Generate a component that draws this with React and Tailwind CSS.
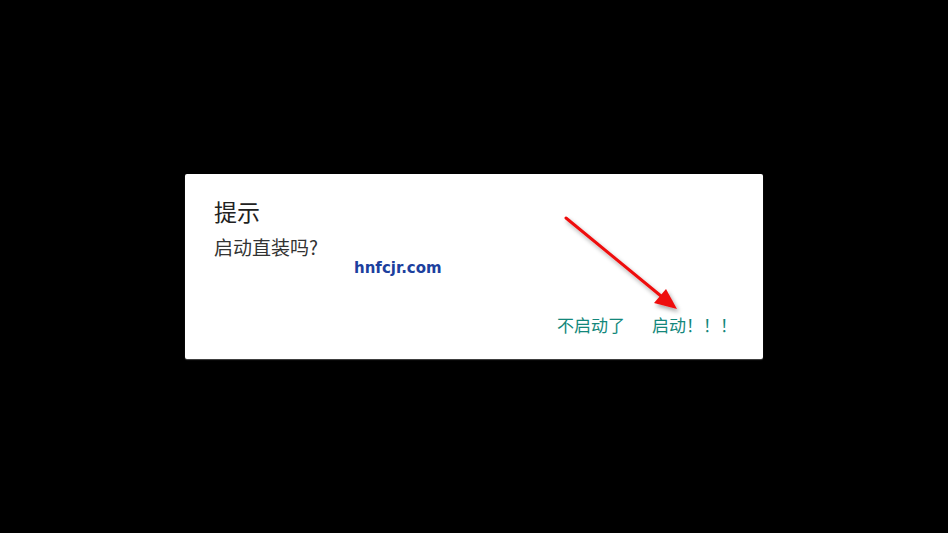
import React from 'react';

const cjk = "font-['Noto_Sans_CJK_SC','Noto_Sans',sans-serif]";

const Arrow = () => (
  <svg className="absolute left-0 top-0 pointer-events-none" width="578" height="185" viewBox="0 0 578 185">
    <defs>
      <filter id="sh" x="-20%" y="-20%" width="140%" height="140%">
        <feDropShadow dx="2" dy="3" stdDeviation="2" floodColor="#000" floodOpacity="0.35" />
      </filter>
    </defs>
    <g filter="url(#sh)">
      <line x1="381" y1="44" x2="476" y2="122" stroke="#ee1111" strokeWidth="3" strokeLinecap="round" />
      <polygon points="492,135 469,129 481,115" fill="#ee1111" />
    </g>
  </svg>
);

export default function App() {
  return (
    <div className="w-[948px] h-[533px] bg-black flex items-start justify-center pt-[174px]">
      <div className={`relative w-[578px] h-[185px] bg-white rounded-[2px] shadow-[0_1px_1px_rgba(120,120,120,0.6)] flex flex-col pl-[29px] pr-[26px] pt-[21px] ${cjk}`}>
        <div className="text-[23px] leading-[32px] text-[#212121]">提示</div>
        <div className="mt-[7px] text-[19px] leading-[26px] text-[#333333]">启动直装吗?</div>
        <div className="flex-1" />
        <div className="flex justify-end gap-[27px] pb-[23px] text-[17px] leading-[22px] text-[#13877b]">
          <span>不启动了</span>
          <span>启动！！！</span>
        </div>
        <div className="absolute left-[169px] top-[84px] text-[15px] leading-[20px] font-bold text-[#1c409e] font-['DejaVu_Sans',sans-serif]">
          hnfcjr.com
        </div>
        <Arrow />
      </div>
    </div>
  );
}
